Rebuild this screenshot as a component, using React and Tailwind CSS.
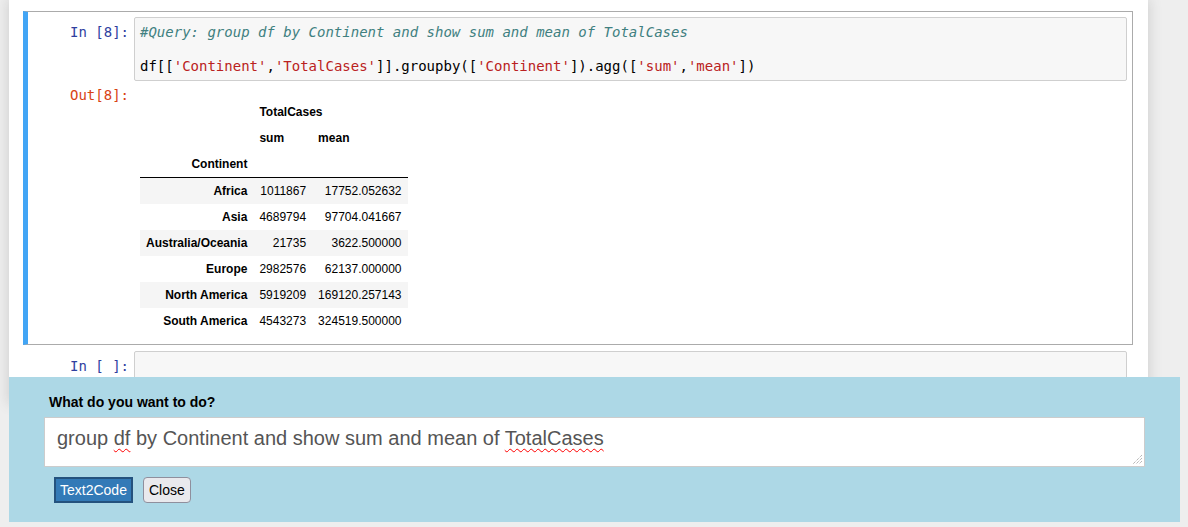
const ROWS = [
  ['Africa', '1011867', '17752.052632'],
  ['Asia', '4689794', '97704.041667'],
  ['Australia/Oceania', '21735', '3622.500000'],
  ['Europe', '2982576', '62137.000000'],
  ['North America', '5919209', '169120.257143'],
  ['South America', '4543273', '324519.500000'],
]

const mono = "font-['DejaVu_Sans_Mono',monospace] text-[14px] leading-[17px]"

function Prompt({ children, color }) {
  return (
    <div className={`w-[106px] shrink-0 text-right pr-[5px] ${mono} ${color}`}>
      {children}
    </div>
  )
}

function Str({ children }) {
  return <span className="text-[#ba2121]">{children}</span>
}

function DataTable() {
  const th = 'px-[6px] py-[6px] leading-[14px] font-bold whitespace-nowrap'
  return (
    <table className="border-collapse font-['Liberation_Sans',Arial,sans-serif] text-[12px] text-black mt-[18px]">
      <thead className="border-b border-black">
        <tr>
          <th className={th}></th>
          <th className={`${th} text-left`} colSpan={2}>TotalCases</th>
        </tr>
        <tr>
          <th className={th}></th>
          <th className={`${th} text-left`}>sum</th>
          <th className={`${th} text-left`}>mean</th>
        </tr>
        <tr>
          <th className={`${th} text-right`}>Continent</th>
          <th className={th}></th>
          <th className={th}></th>
        </tr>
      </thead>
      <tbody>
        {ROWS.map((r, i) => (
          <tr key={r[0]} className={i % 2 === 0 ? 'bg-[#f5f5f5]' : 'bg-white'}>
            <th className={`${th} text-right`}>{r[0]}</th>
            <td className="px-[6px] py-[6px] leading-[14px] text-right whitespace-nowrap">{r[1]}</td>
            <td className="px-[6px] py-[6px] leading-[14px] text-right whitespace-nowrap">{r[2]}</td>
          </tr>
        ))}
      </tbody>
    </table>
  )
}

export default function App() {
  return (
    <div className="relative h-[527px] overflow-hidden bg-[#eeeeee]">
      <div className="ml-[9px] w-[1139px] h-[403px] bg-white shadow-[0_0_12px_1px_rgba(87,87,87,0.2)] pt-[11px] pl-[14px] pr-[15px]">
        {/* selected cell */}
        <div className="border border-[#ababab] border-l-[5px] border-l-[#42a5f5] pt-[5px] pb-[5px] pr-[5px]">
          <div className="flex">
            <Prompt color="text-[#303f9f]">
              <div className="pt-[7px]">In&nbsp;[8]:</div>
            </Prompt>
            <div className={`flex-1 h-[64px] bg-[#f7f7f7] border border-[#cfcfcf] rounded-[2px] pl-[5px] pt-[6px] text-black ${mono}`}>
              <div className="italic text-[#408080] whitespace-pre">#Query: group df by Continent and show sum and mean of TotalCases</div>
              <div className="h-[17px]"></div>
              <div className="whitespace-pre">
                df[[<Str>'Continent'</Str>,<Str>'TotalCases'</Str>]].groupby([<Str>'Continent'</Str>]).agg([<Str>'sum'</Str>,<Str>'mean'</Str>])
              </div>
            </div>
          </div>
          <div className="flex">
            <Prompt color="text-[#d84315]">
              <div className="pt-[6px]">Out[8]:</div>
            </Prompt>
            <div className="flex-1 pl-[6px] pb-[5px]">
              <DataTable />
            </div>
          </div>
        </div>

        {/* empty cell */}
        <div className="border border-transparent border-l-[5px] pt-[5px] pr-[5px]">
          <div className="flex">
            <Prompt color="text-[#303f9f]">
              <div className="pt-[7px]">In&nbsp;[&nbsp;]:</div>
            </Prompt>
            <div className="flex-1 h-[60px] bg-[#f7f7f7] border border-[#cfcfcf] rounded-[2px]"></div>
          </div>
        </div>
      </div>

      {/* Text2Code panel */}
      <div className="absolute left-[9px] top-[377px] w-[1171px] h-[145px] bg-[#add8e6] pt-[17px] pl-[35px] font-['Liberation_Sans',Arial,sans-serif]">
        <div className="pl-[5px] text-[14px] leading-[16px] font-bold text-black">What do you want to do?</div>
        <div className="relative mt-[7px] w-[1101px] h-[50px] bg-white border border-[#cccccc] pl-[12px] pt-[9px] text-[20px] leading-[23px] text-[#555555] whitespace-nowrap">
          group{' '}
          <span className="underline decoration-wavy decoration-[#ff0000] decoration-1 underline-offset-[3px]">df</span>{' '}
          by Continent and show sum and mean of{' '}
          <span className="underline decoration-wavy decoration-[#ff0000] decoration-1 underline-offset-[3px]">TotalCases</span>
          <svg className="absolute right-[1px] bottom-[1px]" width="11" height="11" viewBox="0 0 11 11">
            <path d="M10 1 L1 10 M10 4 L4 10 M10 7 L7 10" stroke="#9a9a9a" strokeWidth="1" strokeDasharray="1 1" />
          </svg>
        </div>
        <div className="flex gap-[10px] mt-[10px] pl-[10px]">
          <button className="h-[26px] px-[4px] bg-[#337ab7] border-2 border-[#24527e] text-white text-[14px] leading-[16px]">
            Text2Code
          </button>
          <button className="h-[26px] px-[5px] bg-[#e9e9ed] border border-[#8f8f9d] rounded-[4px] text-black text-[14px] leading-[16px]">
            Close
          </button>
        </div>
      </div>
    </div>
  )
}
